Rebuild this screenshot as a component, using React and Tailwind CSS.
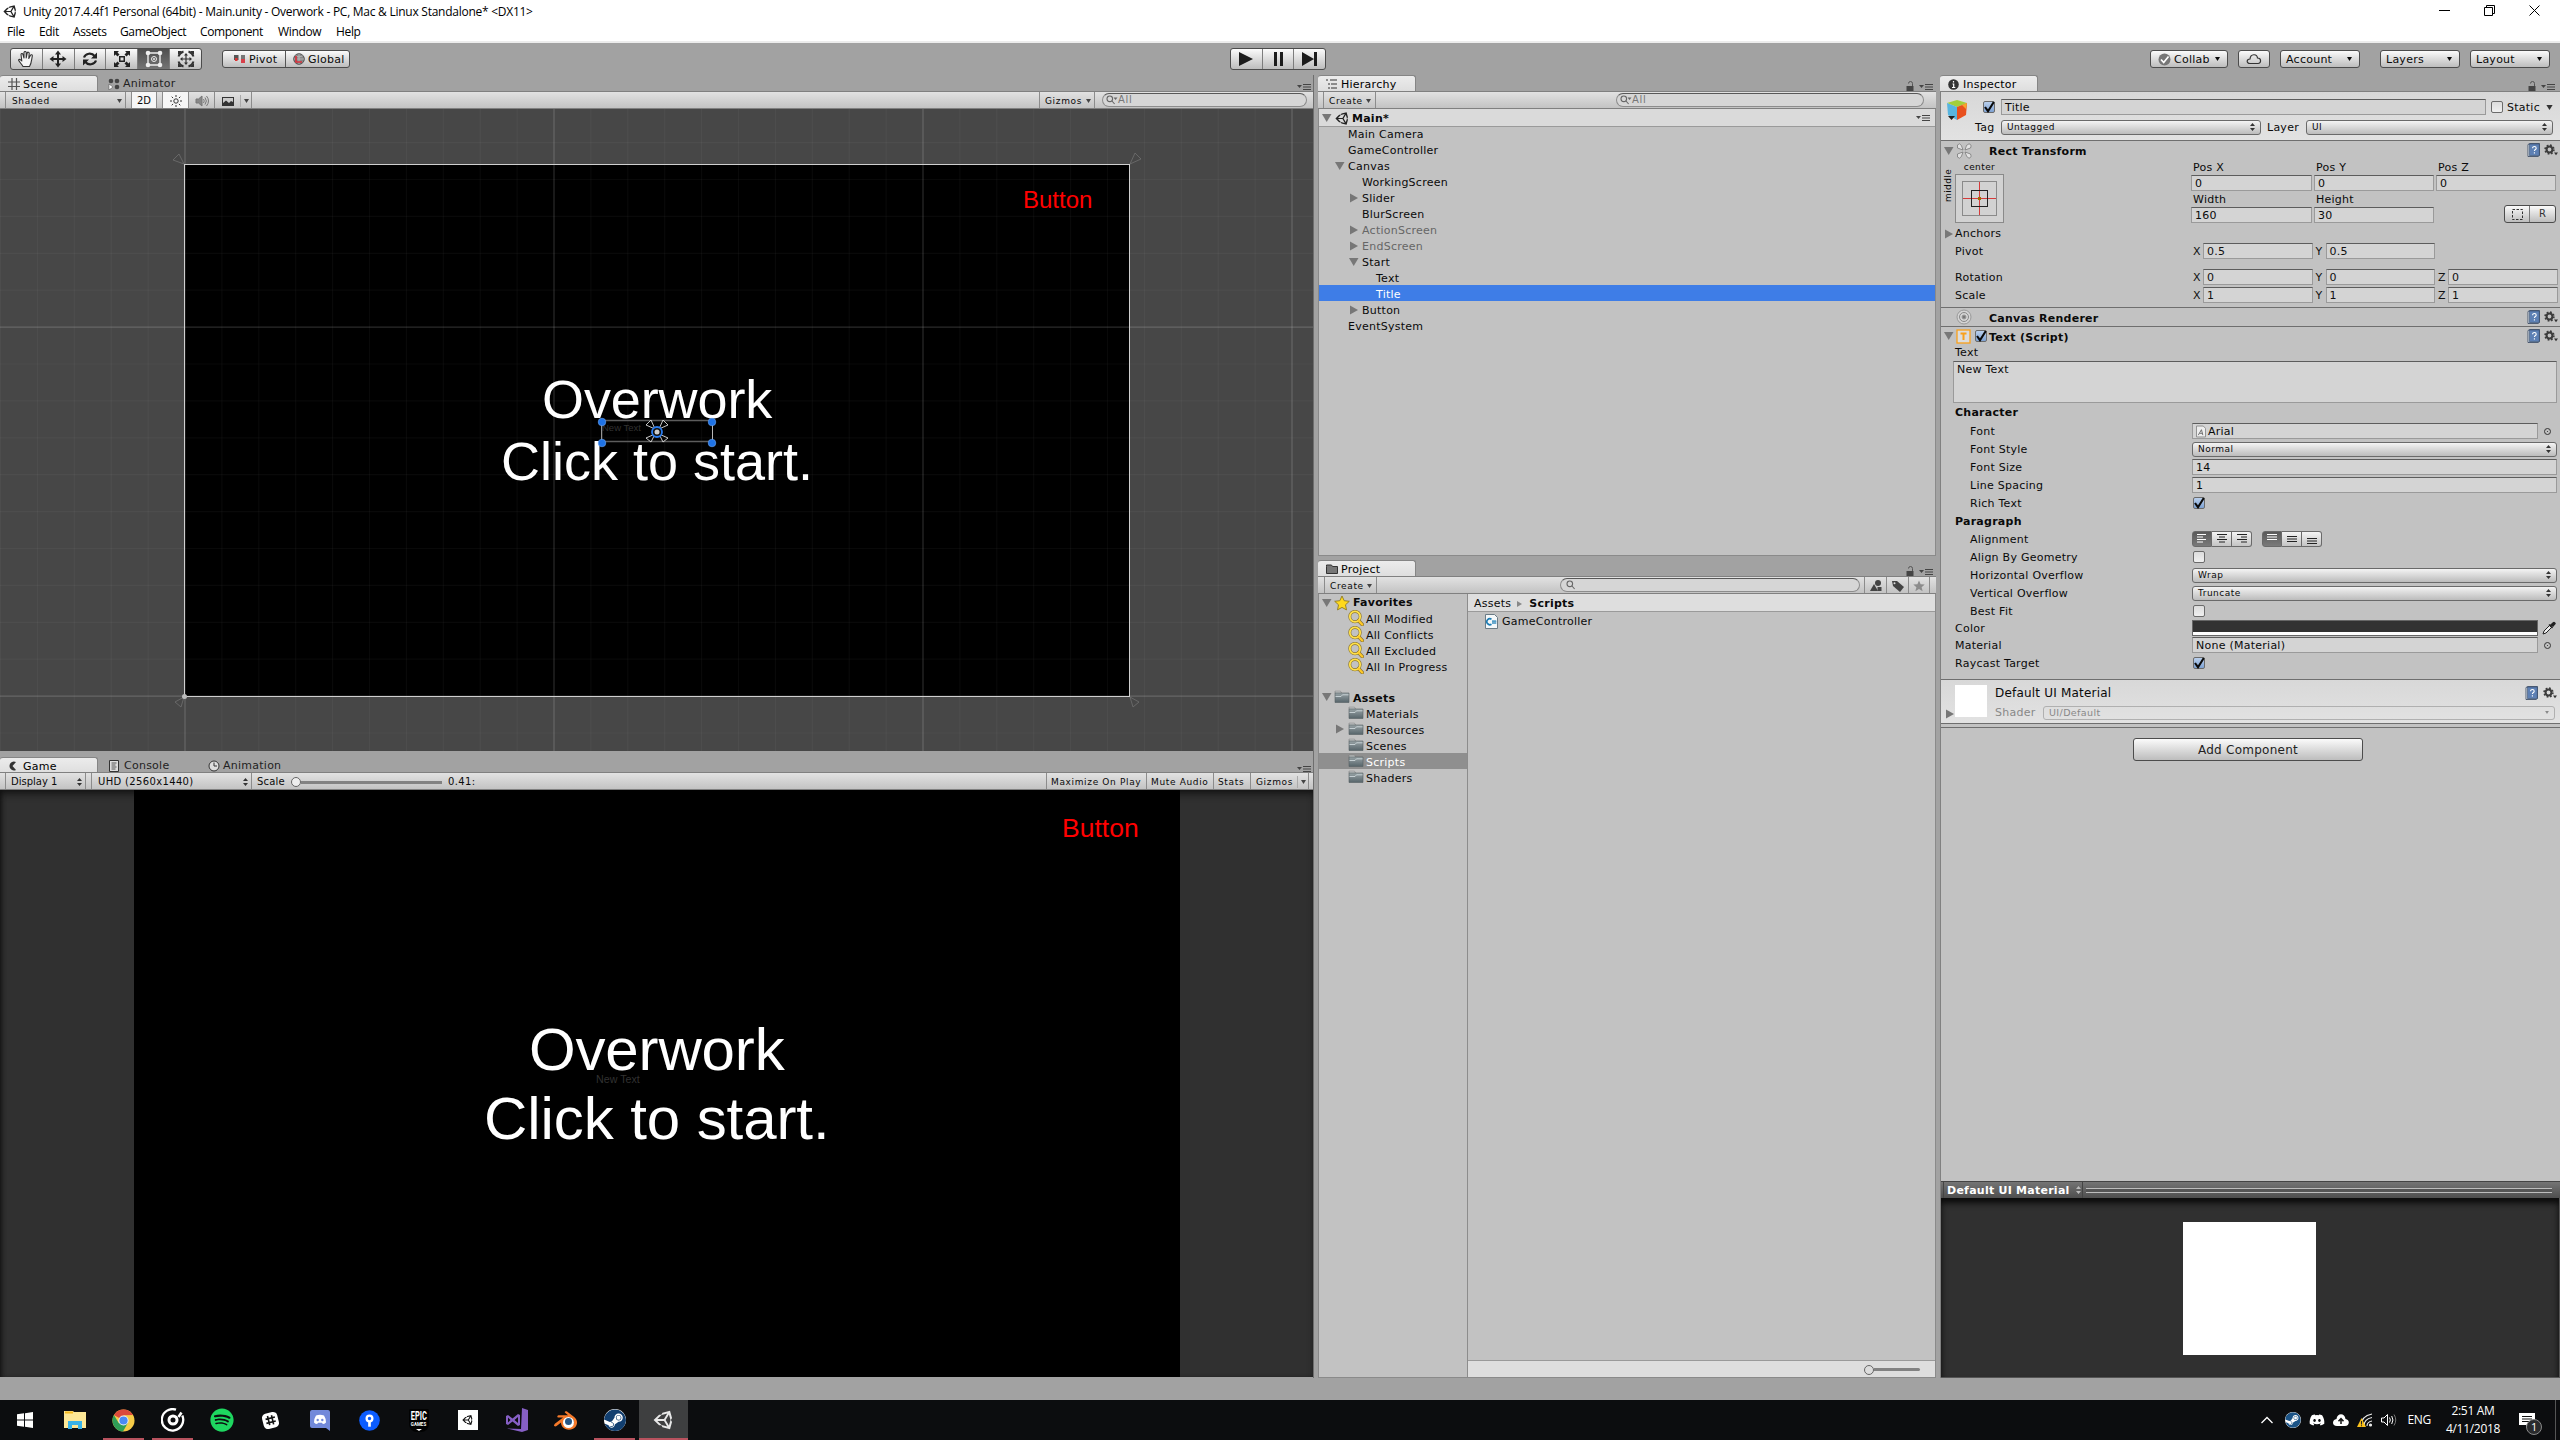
import React from 'react';
import { FaUnity, FaDiscord, FaSpotify, FaSteam } from 'react-icons/fa';
import { SiBlender } from 'react-icons/si';

/* ---------- small glyphs ---------- */

const Down = ({ className = 'w-[5px] h-[4px] text-[#444]' }) => (
  <svg viewBox="0 0 10 8" className={`shrink-0 ${className}`} fill="currentColor"><path d="M0 0h10L5 8z" /></svg>
);

const UpDown = ({ className = 'text-[#333]' }) => (
  <svg viewBox="0 0 5 8" className={`w-[5px] h-2 shrink-0 ${className}`} fill="currentColor">
    <path d="M2.5 0 5 3H0zM2.5 8 0 5h5z" />
  </svg>
);

const Fold = ({ open }) => (
  <svg viewBox="0 0 10 10" className="w-[10px] h-[10px] shrink-0" fill="#777">
    {open ? <path d="M0 1h9.5L4.700 9z" /> : <path d="M1 0.500v9l8-4.500z" />}
  </svg>
);

const PaneMenu = () => (
  <svg viewBox="0 0 14 6" className="w-[14px] h-[6px] shrink-0">
    <path d="M0 1h5L2.5 4z" fill="#444" />
    <path d="M6 .5h8M6 3h8M6 5.5h8" stroke="#444" strokeWidth="1" />
  </svg>
);

const Lock = () => (
  <svg viewBox="0 0 8 10" className="w-2 h-[10px] shrink-0">
    <rect x="0.5" y="5" width="7" height="5" fill="#444" />
    <path d="M2.5 2.5a2 2 0 0 1 4 0V5" fill="none" stroke="#555" strokeWidth="1" />
  </svg>
);

const Mag = ({ className, arrow }) => (
  <svg viewBox="0 0 12 10" className={className} fill="none" stroke="#666" strokeWidth="1.1">
    <circle cx="3.8" cy="3.8" r="2.8" />
    <path d="M6 6l2.6 3" />
    {arrow && <path d="M7.5 2.5h4L9.5 5z" fill="#666" stroke="none" />}
  </svg>
);

const Folder = () => (
  <svg viewBox="0 0 16 14" className="w-4 h-[14px] shrink-0">
    <defs>
      <linearGradient id="fold" x1="0" y1="0" x2="0" y2="1">
        <stop offset="0" stopColor="#98a3a6" /><stop offset="1" stopColor="#56646a" />
      </linearGradient>
    </defs>
    <path d="M1 3V1.2h5.5L7.5 3z" fill="#d9dedf" stroke="#777" strokeWidth=".6" />
    <path d="M1 3h14v9.5H1z" fill="url(#fold)" stroke="#555f63" strokeWidth=".6" />
    <path d="M1.5 6.5h5.5l1.5-1.700h6" fill="none" stroke="#ccd6d9" strokeWidth=".9" />
  </svg>
);

const YellowMag = () => (
  <svg viewBox="0 0 16 16" className="w-4 h-4 shrink-0" fill="none" strokeLinecap="round">
    <path d="M10.500 10.500l3.700 4" stroke="#8a7430" strokeWidth="3.600" />
    <circle cx="7" cy="6.600" r="5.200" stroke="#8a7430" strokeWidth="3" />
    <circle cx="7" cy="6.600" r="5.200" stroke="#ffe14a" strokeWidth="1.800" />
    <path d="M10.500 10.500l3.700 4" stroke="#ffc928" strokeWidth="2.200" />
  </svg>
);

const Help = () => (
  <svg viewBox="0 0 13 14" className="w-[13px] h-[14px] shrink-0">
    <path d="M1 1.5 3 .5h9.5v12L11 13.5H1z" fill="#e8eef5" stroke="#2d3f59" strokeWidth=".8" />
    <rect x="2.600" y="1" width="9.600" height="11.600" fill="#5d80b4" stroke="#33496b" strokeWidth=".6" />
    <path d="M5.600 5.200c0-2.400 3.600-2.200 3.600 0 0 1.300-1.800 1.300-1.800 2.800M7.400 9.300v1.200" stroke="#fff" strokeWidth="1.100" fill="none" />
  </svg>
);

const Gear = () => (
  <svg viewBox="0 0 14 12" className="w-[14px] h-3 shrink-0">
    <circle cx="5.500" cy="5.500" r="2.900" fill="none" stroke="#3c3c3c" strokeWidth="2" />
    <circle cx="5.500" cy="5.500" r="4.400" fill="none" stroke="#3c3c3c" strokeWidth="1.600" strokeDasharray="1.730 1.730" />
    <path d="M10 8.500h4l-2 2.800z" fill="#333" />
  </svg>
);

const Check = ({ on }) => (
  <span className={`w-3 h-3 shrink-0 rounded-[2px] border border-[#6b6b6b] flex items-center justify-center ${on ? 'bg-linear-to-b from-[#b9cfec] to-[#7ea2d3]' : 'bg-linear-to-b from-[#dcdcdc] to-[#f0f0f0]'}`}>
    {on && (
      <svg viewBox="0 0 12 12" className="w-3 h-3 shrink-0 -mt-px" fill="none" stroke="#0a0a0a" strokeWidth="2.100"><path d="M2 6l3 4.200L10.800 1" /></svg>
    )}
  </span>
);

/* ---------- controls ---------- */

const btn = 'border border-[#4c4c4c] bg-linear-to-b from-[#fbfbfb] to-[#bdbdbd]';

const Field = ({ className = '', children }) => (
  <span className={`h-4 flex items-center px-[3px] bg-[#d4d4d4] border border-[#9a9a9a] border-t-[#5c5c5c] ${className}`}>{children}</span>
);

const Select = ({ className = '', children }) => (
  <span className={`h-[15px] flex items-center justify-between pl-[5px] pr-[5px] rounded-[3px] border border-[#6a6a6a] bg-linear-to-b from-[#f4f4f4] to-[#bcbcbc] text-[9px] tracking-[0.5px] ${className}`}>
    {children}<UpDown />
  </span>
);

const Search = ({ className = '', children }) => (
  <div className={`h-[14px] rounded-full border border-[#8c8c8c] border-t-[#585858] bg-[#d6d6d6] flex items-center text-[#777] text-[10px] ${className}`}>{children}</div>
);

const Tab = ({ active, className = '', icon, children }) => (
  <div className={`h-4 flex items-center pl-2 pt-px ${active ? 'w-[98px] rounded-t-[3px] border-t border-r border-[#858585] bg-linear-to-b from-[#ececec] to-[#dedede] text-black' : 'text-[#222]'} ${className}`}>
    <span className="w-[15px] flex items-center shrink-0">{icon}</span>
    {children}
  </div>
);

const Bar = ({ className = '', children }) => (
  <div className={`h-[18px] shrink-0 flex items-stretch border-t border-b border-[#808080] bg-linear-to-b from-[#e2e2e2] to-[#c3c3c3] text-[9px] tracking-[0.65px] [&>span]:pt-[2px] ${className}`}>{children}</div>
);

/* ---------- top ---------- */

function TitleBar() {
  return (
    <div className="h-[43px] shrink-0 bg-white border-b-2 border-[#ececec] font-['Open_Sans',sans-serif] text-[12px] text-black">
      <div className="h-[23px] flex items-center pl-[3px]">
        <FaUnity className="w-[15px] h-[15px] mr-[5px] text-[#222]" />
        <span className="tracking-[-0.260px] whitespace-nowrap">Unity 2017.4.4f1 Personal (64bit) - Main.unity - Overwork - PC, Mac &amp; Linux Standalone* &lt;DX11&gt;</span>
        <div className="ml-auto mr-5 -mt-[2px] flex items-center gap-[34px]">
          <svg viewBox="0 0 11 11" className="w-[11px] h-[11px]" stroke="#000"><path d="M0 5.500h11" /></svg>
          <svg viewBox="0 0 11 11" className="w-[11px] h-[11px]" fill="none" stroke="#000"><path d="M.5 2.500h8v8h-8zM2.500 2.500v-2h8v8h-2" /></svg>
          <svg viewBox="0 0 11 11" className="w-[11px] h-[11px]" stroke="#000"><path d="M.5.5l10 10M10.500.5l-10 10" /></svg>
        </div>
      </div>
      <div className="h-[18px] flex items-center pl-[7px] tracking-[-0.350px]">
        <span className="w-8">File</span><span className="w-[34px]">Edit</span><span className="w-[47px]">Assets</span>
        <span className="w-20">GameObject</span><span className="w-[78px]">Component</span><span className="w-[58px]">Window</span><span>Help</span>
      </div>
    </div>
  );
}

const tools = [
  <svg key="h" viewBox="0 0 18 18" className="w-[18px] h-[18px]" fill="#f6f6f6" stroke="#333" strokeWidth="1.1" strokeLinejoin="round"><path d="M6 16.5C4.500 14 2.500 12 1.500 10c.8-1.200 2-.6 3.300 1L4 4.500c.2-1.300 1.600-1.300 2 0L7 8V2.500c.3-1.400 1.900-1.400 2.200 0V8l1-5c.5-1.300 2-1 2 .3L11.800 8.500l1.700-3.300c.8-1 2.100-.3 1.800.9C14.500 10 14.500 13.500 12.500 16.500z" /></svg>,
  <svg key="m" viewBox="0 0 18 18" className="w-[18px] h-[18px]" fill="#222"><path d="M9 .5 12 4.500h-2V8h3.500V6l4 3-4 3v-2H10v3.500h2L9 17.500 6 13.500h2V10H4.500v2l-4-3 4-3v2H8V4.500H6z" /></svg>,
  <svg key="r" viewBox="0 0 18 18" className="w-[18px] h-[18px]" fill="none" stroke="#222" strokeWidth="2.200"><path d="M3 7.500C4.500 3 11 2.500 13.500 6M15 10.500C13.500 15 7 15.500 4.500 12" /><path d="M16 2.500V8.500h-6zM2 15.500V9.500h6z" fill="#222" stroke="none" /></svg>,
  <svg key="s" viewBox="0 0 18 18" className="w-[18px] h-[18px]" fill="#222"><path d="M6 6h6v6H6zM1 1h5L4.500 2.500 6.500 4.500l-2 2-2-2L1 6zM17 1v5l-1.500-1.500-2 2-2-2 2-2L12 1zM1 17v-5l1.500 1.500 2-2 2 2-2 2L6 17zM17 17h-5l1.500-1.500-2-2 2-2 2 2L17 12z" /><path d="M7.500 7.500h3v3h-3z" fill="#ddd" /></svg>,
  <svg key="t" viewBox="0 0 18 18" className="w-[18px] h-[18px]" fill="none" stroke="#eee" strokeWidth="1.400"><path d="M3 3h12v12H3z" /><circle cx="9" cy="9" r="2.500" strokeWidth="1" /><g fill="#eee" stroke="none"><circle cx="9" cy="9" r="1" /><circle cx="3" cy="3" r="2.300" /><circle cx="15" cy="3" r="2.300" /><circle cx="3" cy="15" r="2.300" /><circle cx="15" cy="15" r="2.300" /></g></svg>,
  <svg key="a" viewBox="0 0 18 18" className="w-[18px] h-[18px]" fill="none" stroke="#333" strokeWidth="1.900"><path d="M9 4v10M4 9h10" strokeWidth="1.200" /><path d="M9 3l2 2.500H7zM9 15l2-2.500H7zM3 9l2.500 2V7zM15 9l-2.500 2V7z" fill="#333" stroke="none" /><path d="M1.500 6.500A8 8 0 0 1 6.500 1.500M11.500 1.500A8 8 0 0 1 16.500 6.500M16.500 11.500a8 8 0 0 1-5 5M6.500 16.500a8 8 0 0 1-5-5" /><path d="M1 1h4L1 5zM17 1v4l-4-4zM1 17v-4l4 4zM17 17h-4l4-4z" fill="#333" stroke="none" /></svg>,
];

const plays = [
  <svg key="p" viewBox="0 0 14 14" className="w-[14px] h-[14px]" fill="#1c1c1c"><path d="M0 0 14 7 0 14z" /></svg>,
  <svg key="u" viewBox="0 0 14 14" className="w-[14px] h-[14px]" fill="#1c1c1c"><path d="M3 0h3v14H3zM9 0h3v14H9z" /></svg>,
  <svg key="n" viewBox="0 0 16 14" className="w-4 h-[14px]" fill="#1c1c1c"><path d="M0 0 12 7 0 14zM12 0h3v14h-3z" /></svg>,
];

function Toolbar() {
  return (
    <div className="h-8 shrink-0 flex items-center pr-[10px]">
      <div className={`ml-[10px] h-[22px] w-48 flex rounded-[3px] overflow-hidden ${btn}`}>
        {tools.map((t, i) => (
          <span key={i} className={`flex-1 flex items-center justify-center ${i ? 'border-l border-[#7d7d7d]' : ''} ${i === 4 ? 'bg-linear-to-b from-[#4f4f4f] to-[#747474]' : ''}`}>{t}</span>
        ))}
      </div>
      <div className={`ml-5 h-[18px] w-32 flex rounded-[3px] ${btn}`}>
        <span className="w-1/2 flex items-center pl-[10px] border-r border-[#555]">
          <svg viewBox="0 0 13 10" className="w-[13px] h-[10px] mr-[3px]"><rect x="1" y="1" width="4.500" height="5" fill="#555" /><rect x="2" y="4" width="2.500" height="3" fill="#d33" /><rect x="8" y="1" width="4" height="5" fill="#777" /><rect x="8" y="5" width="4" height="4" fill="#d8404a" /></svg>
          Pivot
        </span>
        <span className="w-1/2 flex items-center pl-[7px]">
          <svg viewBox="0 0 12 12" className="w-3 h-3 mr-[3px]"><circle cx="6" cy="6" r="5.300" fill="#888" stroke="#555" /><path d="M6 1v10M1 6h10M2.500 3q3.500 2 7 0" stroke="#ccc" strokeWidth=".6" fill="none" /><path d="M3 3v6h6" stroke="#d8303c" strokeWidth="1.700" fill="none" /></svg>
          Global
        </span>
      </div>
      <div className={`ml-[880px] h-[22px] w-24 flex rounded-[3px] ${btn}`}>
        {plays.map((p, i) => <span key={i} className={`flex-1 flex items-center justify-center ${i ? 'border-l border-[#7d7d7d]' : ''}`}>{p}</span>)}
      </div>
      <div className="ml-auto flex">
        <span className={`h-[18px] w-[78px] rounded-[3px] flex items-center pl-[7px] pr-[7px] ${btn}`}>
          <svg viewBox="0 0 13 13" className="w-[13px] h-[13px] mr-[3px]"><circle cx="6.500" cy="6.500" r="6" fill="#777" /><path d="M3 6.500l2.700 3L10.500 3.500" stroke="#fff" strokeWidth="1.700" fill="none" /></svg>
          Collab<Down className="ml-auto w-[5px] h-[4px]" />
        </span>
        <span className={`ml-[10px] h-[18px] w-8 rounded-[3px] flex items-center justify-center ${btn}`}>
          <svg viewBox="0 0 16 12" className="w-4 h-3" fill="none" stroke="#333" strokeWidth="1.200"><path d="M4 10.500C0 10.500.500 6 4 6 4.500 .500 11 .500 11.500 5c4 0 4 5.500.500 5.500z" /></svg>
        </span>
        {[['Account', 'ml-[10px]'], ['Layers', 'ml-5'], ['Layout', 'ml-[10px]']].map(([t, m]) => (
          <span key={t} className={`${m} h-[18px] w-20 rounded-[3px] flex items-center justify-between pl-[5px] pr-[7px] ${btn}`}>{t}<Down className="w-[5px] h-[4px]" /></span>
        ))}
      </div>
    </div>
  );
}

/* ---------- scene and game ---------- */

const range = (n) => Array.from({ length: n }, (_, i) => i);

function SceneGrid() {
  return (
    <svg viewBox="0 0 1313 642" className="block w-[1313px] h-[642px]">
      <rect width="1313" height="642" fill="#474747" />
      <rect x="184.500" y="55.500" width="945" height="532" fill="#000" />
      {range(36).map((i) => {
        const major = i % 10 === 5;
        return <path key={i} d={`M${(0.5 + i * 36.9).toFixed(1)} 0V642`} stroke="#fff" strokeOpacity={major ? 0.17 : 0.035} strokeWidth="1.2" />;
      })}
      {range(17).map((i) => {
        const major = i === 5 || i === 15;
        return <path key={i} d={`M0 ${(33.6 + i * 36.9).toFixed(1)}H1313`} stroke="#fff" strokeOpacity={major ? 0.17 : 0.035} strokeWidth="1.2" />;
      })}
      <rect x="184.500" y="55.500" width="945" height="532" fill="none" stroke="#d0d0d0" />
      <g fill="none" stroke="#707070" strokeWidth=".8">
        <path d="M184 55l-11-4 6-6zM1130 55l5-11 6 6zM1130 588l9 5-6 5zM184 588l-9 5 6 5z" />
      </g>
      <circle cx="184.500" cy="587.500" r="2.500" fill="#bbb" />
    </svg>
  );
}

function Gizmo() {
  return (
    <svg viewBox="0 0 124 36" className="absolute left-[595px] top-[305px] w-[124px] h-9">
      <path d="M7 6.500H118M7 27.500H118" stroke="#5c5c5c" strokeWidth="1.500" />
      <path d="M6.700 8V28M117.500 8V28" stroke="#b8b8b8" />
      {[[7, 8], [117, 8], [7, 29], [117, 29]].map(([x, y]) => <circle key={`${x}-${y}`} cx={x} cy={y} r="3.800" fill="#1f73e6" stroke="#69a4f2" strokeWidth=".6" />)}
      <g fill="none" stroke="#ddd" strokeWidth=".9">
        <path d="M60 15l-9-4 5-5zM64 15l9-4-5-5zM60 20l-9 4 5 4zM64 20l9 4-5 4z" />
      </g>
      <circle cx="62" cy="18" r="5" fill="#111" stroke="#2a7df0" strokeWidth="1.800" />
      <circle cx="62" cy="18" r="2.500" fill="#ccc" />
    </svg>
  );
}

function SceneView() {
  return (
    <div className="flex flex-col">
      <div className="h-4 flex relative">
        <Tab active icon={<svg viewBox="0 0 12 12" className="w-3 h-3" stroke="#555" strokeWidth="1.200"><path d="M4 0v12M8.500 0v12M0 4h12M0 8.500h12" /></svg>}>Scene</Tab>
        <Tab className="ml-[2px]" icon={<svg viewBox="0 0 12 12" className="w-3 h-3" fill="#444"><circle cx="3" cy="3" r="2.300" /><circle cx="9" cy="3" r="2.300" /><circle cx="9" cy="9" r="2.300" /><path d="M1 6v6l4-3z" fill="#fff" stroke="#444" strokeWidth=".5" /></svg>}>Animator</Tab>
        <span className="ml-auto mr-[2px] pt-[9px]"><PaneMenu /></span>
      </div>
      <Bar>
        <span className="ml-[5px] w-[121px] border-x border-[#8c8c8c] flex items-center justify-between pl-[6px] pr-[3px]">Shaded<Down /></span>
        <span className="ml-[5px] w-[26px] bg-[#f6f6f6] border-x border-[#8c8c8c] flex items-center justify-center text-[10px] tracking-normal">2D</span>
        <span className="ml-[5px] w-[27px] bg-[#f6f6f6] border-x border-[#8c8c8c] flex items-center justify-center">
          <svg viewBox="0 0 12 12" className="w-3 h-3" fill="none" stroke="#333"><circle cx="6" cy="6" r="2.200" /><path d="M6 0v2M6 10v2M0 6h2M10 6h2M1.700 1.700l1.400 1.400M8.900 8.900l1.400 1.400M10.300 1.700 8.900 3.100M3.100 8.900 1.700 10.300" /></svg>
        </span>
        <span className="w-[26px] border-r border-[#8c8c8c] flex items-center justify-center">
          <svg viewBox="0 0 14 12" className="w-[14px] h-3" fill="none" stroke="#777"><path d="M1 4h2.500L7 1v10L3.500 8H1z" fill="#888" /><path d="M8.500 4q1.500 2 0 4M10 2.500q2.700 3.500 0 7M11.500 1q4 5 0 10" /></svg>
        </span>
        <span className="w-[37px] border-r border-[#8c8c8c] flex items-center pl-[7px]">
          <svg viewBox="0 0 12 9" className="w-3 h-[9px]"><rect width="12" height="9" fill="#333" /><path d="M1 1h10v4L9 4 7 6 4 3.500 1 6z" fill="#ccc" /></svg>
          <span className="ml-[6px] h-3 border-l border-[#aaa] pl-[3px] flex items-center"><Down /></span>
        </span>
        <span className="ml-auto w-14 border-x border-[#8c8c8c] flex items-center justify-between pl-[5px] pr-[3px]">Gizmos<Down /></span>
        <Search className="ml-[7px] mr-[6px] mt-px w-[205px] pl-[3px]"><Mag arrow className="w-3 h-[10px]" />All</Search>
      </Bar>
      <div className="relative w-[1313px] h-[642px] overflow-hidden font-['Liberation_Sans',Arial,sans-serif] tracking-normal leading-none text-white">
        <SceneGrid />
        <span className="absolute left-[1023px] top-[79px] text-[24px] text-[#f00]">Button</span>
        <span className="absolute left-[542px] top-[263px] text-[54px] tracking-[-0.100px]">Overwork</span>
        <span className="absolute left-[501px] top-[325px] text-[54px] whitespace-nowrap">Click to start.</span>
        <span className="absolute left-[602px] top-[314px] text-[9.500px] text-[#323232]">New Text</span>
        <Gizmo />
      </div>
    </div>
  );
}

function GameView() {
  return (
    <div className="flex flex-col mt-[6px]">
      <div className="h-[15px] flex">
        <Tab active icon={<svg viewBox="0 0 10 10" className="w-[10px] h-[10px]"><path d="M8 1A4.500 4.500 0 1 0 8 9L4.500 5z" fill="#333" /></svg>}>Game</Tab>
        <Tab className="ml-[3px] w-[98px]" icon={<svg viewBox="0 0 10 12" className="w-[10px] h-3" fill="none" stroke="#333"><path d="M.5.5h9v11h-9z" fill="#ddd" /><path d="M2.500 3h5M2.500 5h4M2.500 7h5M2.500 9h4" strokeWidth=".8" /></svg>}>Console</Tab>
        <Tab className="ml-px" icon={<svg viewBox="0 0 12 12" className="w-3 h-3" fill="#ddd" stroke="#333"><circle cx="6" cy="6" r="5" /><path d="M6 2.500V6h3" fill="none" /></svg>}>Animation</Tab>
        <span className="ml-auto mr-[2px] pt-[9px]"><PaneMenu /></span>
      </div>
      <Bar>
        <span className="ml-[5px] w-[81px] border-x border-[#8c8c8c] flex items-center justify-between pl-[5px] pr-[3px] text-[10px] tracking-normal">Display 1<UpDown /></span>
        <span className="ml-[5px] w-[161px] border-x border-[#8c8c8c] flex items-center justify-between pl-[6px] pr-[3px] text-[10px] tracking-[0.350px]">UHD (2560x1440)<UpDown /></span>
        <span className="flex items-center pl-[5px] text-[10px] tracking-[0.200px]">Scale</span>
        <span className="ml-[6px] w-[151px] flex items-center">
          <span className="w-[10px] h-[10px] rounded-full border border-[#666] bg-[#eee] shrink-0" />
          <span className="flex-1 h-[3px] bg-[#828282]" />
        </span>
        <span className="ml-[6px] flex items-center text-[10px] tracking-[0.400px]">0.41:</span>
        <span className="ml-auto w-[100px] border-l border-[#8c8c8c] flex items-center pl-1 whitespace-nowrap">Maximize On Play</span>
        <span className="w-[67px] border-l border-[#8c8c8c] flex items-center pl-1 whitespace-nowrap">Mute Audio</span>
        <span className="w-[37px] border-l border-[#8c8c8c] flex items-center pl-1">Stats</span>
        <span className="w-[59px] mr-[4px] border-x border-[#8c8c8c] flex items-center pl-[5px]">Gizmos
          <span className="ml-[4px] h-3 border-l border-[#aaa] pl-[3px] flex items-center"><Down /></span>
        </span>
      </Bar>
      <div className="relative w-[1313px] h-[587px] bg-[#303030] shadow-[inset_0_6px_8px_-3px_#111,inset_3px_0_5px_-2px_#111] px-[134px] font-['Liberation_Sans',Arial,sans-serif] tracking-normal leading-none text-white">
        <div className="w-[1046px] h-full bg-black" />
        <span className="absolute left-[1062px] top-[25px] text-[26.500px] text-[#f00]">Button</span>
        <span className="absolute left-[529px] top-[230px] text-[60px] tracking-[-0.150px]">Overwork</span>
        <span className="absolute left-[596px] top-[284px] text-[10.700px] text-[#323232]">New Text</span>
        <span className="absolute left-[484px] top-[299px] text-[60px] tracking-[-0.080px] whitespace-nowrap">Click to start.</span>
      </div>
    </div>
  );
}

/* ---------- hierarchy and project ---------- */

const nodes = [
  ['Main Camera', 0], ['GameController', 0], ['Canvas', 0, 'open'], ['WorkingScreen', 1], ['Slider', 1, 'closed'],
  ['BlurScreen', 1], ['ActionScreen', 1, 'closed', true], ['EndScreen', 1, 'closed', true], ['Start', 1, 'open'],
  ['Text', 2], ['Title', 2], ['Button', 1, 'closed'], ['EventSystem', 0],
];
const indent = ['pl-4', 'pl-[30px]', 'pl-[44px]'];

function Hierarchy() {
  return (
    <div className="flex flex-col h-[481px]">
      <div className="h-4 flex">
        <Tab active icon={<svg viewBox="0 0 12 10" className="w-3 h-[10px]" stroke="#333"><path d="M0 1h2M4 1h7M2 5h2M5 5h6M2 9h2M5 9h6" /></svg>}>Hierarchy</Tab>
        <span className="ml-auto mr-[3px] flex items-end gap-[5px]"><Lock /><span className="pb-px"><PaneMenu /></span></span>
      </div>
      <Bar>
        <span className="ml-[5px] w-[53px] border-x border-[#8c8c8c] flex items-center justify-between pl-[5px] pr-[4px]">Create<Down /></span>
        <Search className="ml-auto mr-3 mt-px w-[308px] pl-[3px]"><Mag arrow className="w-3 h-[10px]" />All</Search>
      </Bar>
      <div className="flex-1 bg-[#c2c2c2] border-x border-b border-[#8a8a8a]">
        <div className="h-[18px] bg-[#dadada] border-b border-[#9a9a9a] flex items-center pt-px pl-[3px] pr-[5px]">
          <Fold open /><FaUnity className="ml-[3px] mr-[2px] w-[15px] h-[15px] text-[#222]" /><b>Main*</b>
          <span className="ml-auto"><PaneMenu /></span>
        </div>
        <div className="-mt-[2px]">
          {nodes.map(([name, d, fold, dim]) => (
            <div key={name} className={`h-4 flex items-center pt-[2px] ${indent[d]} ${name === 'Title' ? 'bg-[#3e7de7] text-white' : dim ? 'text-[#666]' : ''}`}>
              <span className="w-[13px] flex -mt-px">{fold && <Fold open={fold === 'open'} />}</span>{name}
            </div>
          ))}
        </div>
      </div>
    </div>
  );
}

function Project() {
  return (
    <div className="flex flex-col flex-1 mt-1">
      <div className="h-4 flex">
        <Tab active icon={<svg viewBox="0 0 12 10" className="w-3 h-[10px]"><path d="M.5 2.500V1h5l1 1.500h5v7H.5z" fill="#777" stroke="#333" /></svg>}>Project</Tab>
        <span className="ml-auto mr-[3px] flex items-end gap-[5px]"><Lock /><span className="pb-px"><PaneMenu /></span></span>
      </div>
      <Bar>
        <span className="ml-[6px] w-[53px] border-x border-[#8c8c8c] flex items-center justify-between pl-[5px] pr-[4px]">Create<Down /></span>
        <Search className="ml-auto mr-1 mt-px w-[300px] pl-[5px]"><Mag className="w-3 h-[10px]" /></Search>
        <span className="w-[22px] border-l border-[#8c8c8c] flex items-center justify-center"><svg viewBox="0 0 12 12" className="w-3 h-3" fill="#444"><path d="M4 4l4 7H0z" /><circle cx="8" cy="3" r="3" /><path d="M7.500 7h4v4h-4z" /></svg></span>
        <span className="w-[22px] border-l border-[#8c8c8c] flex items-center justify-center"><svg viewBox="0 0 12 12" className="w-3 h-3" fill="#444"><path d="M0 1h5l7 6-4 5-7-6z" /><circle cx="2.500" cy="3.200" r="1" fill="#ddd" /></svg></span>
        <span className="w-[22px] mr-[6px] border-x border-[#8c8c8c] flex items-center justify-center"><svg viewBox="0 0 12 12" className="w-3 h-3" fill="#8c8c8c"><path d="M6 .5l1.600 3.800 4.100.3-3.100 2.700 1 4L6 9.100l-3.600 2.200 1-4L.3 4.600l4.100-.3z" /></svg></span>
      </Bar>
      <div className="flex-1 flex bg-[#c2c2c2] border-x border-b border-[#8a8a8a]">
        <div className="w-[149px] border-r border-[#8c8c8c]">
          <div className="h-4 flex items-center pl-[3px] pt-px">
            <Fold open />
            <svg viewBox="0 0 16 16" className="w-4 h-4 ml-[2px] mr-[3px]"><path d="M8 1l2.200 4.700 5.100.6-3.800 3.500 1 5.100L8 12.400l-4.500 2.500 1-5.100L.7 6.300l5.100-.6z" fill="#ffd91c" stroke="#8f7a20" strokeWidth=".9" /></svg>
            <b>Favorites</b>
          </div>
          {['All Modified', 'All Conflicts', 'All Excluded', 'All In Progress'].map((t) => (
            <div key={t} className="h-4 flex items-center pl-[29px] gap-[2px] whitespace-nowrap"><YellowMag /><span className="pt-[2px]">{t}</span></div>
          ))}
          <div className="h-4 mt-[15px] flex items-center pl-[3px]"><Fold open /><span className="ml-[2px] mr-[3px]"><Folder /></span><b className="pt-[2px]">Assets</b></div>
          {['Materials', 'Resources', 'Scenes', 'Scripts', 'Shaders'].map((t) => (
            <div key={t} className={`h-4 flex items-center pl-4 ${t === 'Scripts' ? 'bg-[#8f8f8f] text-white' : ''}`}>
              <span className="w-[13px] flex">{t === 'Resources' && <Fold />}</span><Folder /><span className="ml-[2px] pt-[2px]">{t}</span>
            </div>
          ))}
        </div>
        <div className="flex-1 flex flex-col">
          <div className="h-[18px] bg-[#dedede] border-b border-[#9a9a9a] flex items-center pt-[2px] pl-[6px]">
            Assets
            <svg viewBox="0 0 5 6" className="w-[5px] h-[6px] ml-[6px] mr-[7px]" fill="#888"><path d="M0 0l5 3-5 3z" /></svg>
            <b>Scripts</b>
          </div>
          <div className="h-[18px] flex items-center pl-[17px]">
            <svg viewBox="0 0 13 15" className="w-[13px] h-[15px] mr-1"><path d="M.5.5h9l3 3v11H.5z" fill="#f4f8fa" stroke="#6b7b85" /><path d="M6.500 5.200a3 3 0 1 0 0 5" fill="none" stroke="#1c7db5" strokeWidth="1.700" /><path d="M8 6v4M10 6v4M7 7.200h4.500M7 9h4.500" stroke="#1c7db5" strokeWidth=".8" /></svg>
            <span className="pt-px">GameController</span>
          </div>
          <div className="mt-auto h-[17px] bg-[#dedede] border-t border-[#9a9a9a] flex items-center justify-end pt-px pr-[15px]">
            <span className="w-[10px] h-[10px] rounded-full border border-[#666] bg-[#ddd]" />
            <span className="w-[46px] h-[3px] bg-[#828282] rounded-r" />
          </div>
        </div>
      </div>
    </div>
  );
}

/* ---------- inspector ---------- */

const CompHead = ({ fold, icon, check, className = '', children }) => (
  <div className={`flex items-center pl-[3px] pr-[2px] ${className}`}>
    <span className="w-[12px] flex">{fold && <Fold open />}</span>
    <span className="w-[19px] flex">{icon}</span>
    <span className="w-[14px] flex">{check && <Check on />}</span>
    <b className="pt-[2px]">{children}</b>
    <span className="ml-auto -mt-px flex items-center gap-1"><Help /><Gear /></span>
  </div>
);

const Row = ({ label, sub, h = 'h-[18px]', children }) => (
  <div className={`flex items-center pr-[3px] ${h}`}>
    <span className={`w-[251px] shrink-0 ${sub ? 'pl-[29px]' : 'pl-[14px]'}`}>{label}</span>
    {children}
  </div>
);

const Axis = ({ n, v }) => (
  <span className="w-[120.500px] flex items-center text-[#111]">
    <span className="w-[11px] pl-px">{n}</span><Field className="flex-1">{v}</Field>
  </span>
);

const Dot = () => (
  <svg viewBox="0 0 9 9" className="w-[9px] h-[9px] mx-auto" fill="none" stroke="#333"><circle cx="4.500" cy="4.500" r="3" /><circle cx="4.500" cy="4.500" r=".6" fill="#333" stroke="none" /></svg>
);

const Lines = ({ d, on, first, last }) => (
  <span className={`w-5 h-4 flex items-center justify-center border border-[#6a6a6a] ${first ? 'rounded-l-[3px]' : 'border-l-0'} ${last ? 'rounded-r-[3px]' : ''} ${on ? 'bg-linear-to-b from-[#5a5a5a] to-[#7a7a7a] text-white' : 'bg-linear-to-b from-[#f4f4f4] to-[#c4c4c4] text-[#222]'}`}>
    <svg viewBox="0 0 10 10" className="w-[10px] h-[10px]" stroke="currentColor"><path d={d} /></svg>
  </span>
);

function RectTransform() {
  const cols = 'grid grid-cols-[121px_120px_120px] gap-x-[2px]';
  return (
    <div className="h-[167px] border-b border-[#6e6e6e]">
      <CompHead fold className="h-[19px]" icon={<svg viewBox="0 0 16 16" className="w-4 h-4" fill="#e2e2e2" stroke="#777" strokeWidth=".8"><path d="M7 7 1.500 5Q.5 1 3.500 .8Q5.500 1 7 7zM9 7q1-6 4-6.200Q16 1.500 14.500 5zM7 9q-1.500 6-3.500 6.200Q.5 15 1.500 11zM9 9l5.500 2q1.500 3.500-1.500 4.200Q10.500 15 9 9z" /></svg>}>Rect Transform</CompHead>
      <div className="flex h-[64px]">
        <div className="w-[250px] flex">
          <span className="w-[14px] pt-[14px] flex items-center justify-center text-[9px] tracking-[0.4px] [writing-mode:vertical-rl] rotate-180">middle</span>
          <div className="w-[49px]">
            <div className="h-[14px] text-center text-[9px] leading-[14px] tracking-[0.4px]">center</div>
            <svg viewBox="0 0 49 49" className="block w-[49px] h-[49px]" fill="none">
              <rect x=".5" y=".5" width="48" height="48" fill="#d2d2d2" stroke="#8a8a8a" />
              <rect x="7.500" y="7.500" width="34" height="34" stroke="#8a8a8a" />
              <path d="M24.500 8v33M8 24.500h33" stroke="#d63a3a" />
              <rect x="16.500" y="16.500" width="16" height="16" stroke="#222" />
              <rect x="23" y="23" width="3" height="3" fill="#a06a00" />
            </svg>
          </div>
        </div>
        <div>
          <div className={`${cols} h-[15px] items-center`}><span className="pl-[2px]">Pos X</span><span className="pl-[2px]">Pos Y</span><span className="pl-[2px]">Pos Z</span></div>
          <div className={cols}><Field>0</Field><Field>0</Field><Field>0</Field></div>
          <div className={`${cols} h-4 items-center`}><span className="pl-[2px]">Width</span><span className="pl-[2px]">Height</span></div>
          <div className={`${cols} h-4`}><Field>160</Field><Field>30</Field>
            <span className={`ml-auto -mt-[2px] w-[52px] h-[18px] flex rounded-[3px] ${btn}`}>
              <span className="w-1/2 border-r border-[#777] flex items-center justify-center"><svg viewBox="0 0 11 11" className="w-[11px] h-[11px]" fill="none" stroke="#333"><path d="M.5.5h10v10H.5z" strokeDasharray="2.500 1.500" /></svg></span>
              <span className="w-1/2 flex items-center justify-center text-[10px] text-[#333]">R</span>
            </span>
          </div>
        </div>
      </div>
      <div className="h-[17px] flex items-center pl-[3px] mt-px"><Fold /><span className="pl-px">Anchors</span></div>
      <Row label="Pivot"><span className="flex gap-[2px]"><Axis n="X" v="0.5" /><Axis n="Y" v="0.5" /></span></Row>
      <div className="h-2" />
      <Row label="Rotation"><span className="flex gap-[2px]"><Axis n="X" v="0" /><Axis n="Y" v="0" /><Axis n="Z" v="0" /></span></Row>
      <Row label="Scale"><span className="flex gap-[2px]"><Axis n="X" v="1" /><Axis n="Y" v="1" /><Axis n="Z" v="1" /></span></Row>
    </div>
  );
}

function Inspector() {
  return (
    <div className="flex flex-col w-[620px]">
      <div className="h-4 flex">
        <Tab active icon={<svg viewBox="0 0 11 11" className="w-[11px] h-[11px]"><circle cx="5.500" cy="5.500" r="5.300" fill="#333" /><path d="M5.500 2v1.500M4.500 5h1.200v3.500M4 8.500h3.300" stroke="#fff" strokeWidth="1.200" fill="none" /></svg>}>Inspector</Tab>
        <span className="ml-auto mr-[5px] flex items-end gap-[5px]"><Lock /><span className="pb-px"><PaneMenu /></span></span>
      </div>
      <div className="flex-1 flex flex-col bg-[#c2c2c2] border-l border-t border-[#808080]">
        <div className="h-[49px] bg-linear-to-b from-[#d8d8d8] to-[#e2e2e2] border-b border-[#6e6e6e] flex pl-[5px]">
          <svg viewBox="0 0 22 22" className="w-[22px] h-[22px] mt-[7px]"><path d="M1 4 11 1l10 3-10 4z" fill="#a3cf3c" /><path d="M1 4l10 4v13L2 16z" fill="#58b5e0" /><path d="M21 4 11 8v13l9-5z" fill="#e8501e" /><path d="M16 6l5-2-1 6z" fill="#f7a52c" /><path d="M2 17h7l-3.500 4z" fill="#222" /></svg>
          <div className="flex-1 pl-[7px]">
            <div className="flex items-center h-4 mt-[7px] pl-2">
              <Check on /><Field className="ml-[6px] w-[485px]">Title</Field>
              <span className="ml-[5px]"><Check /></span><span className="ml-1">Static</span><Down className="ml-[5px] w-[9px] h-[5px] text-[#333]" />
            </div>
            <div className="flex items-center h-4 mt-1"><span className="w-[26px]">Tag</span><Select className="w-[260px]">Untagged</Select><span className="w-[39px] ml-[6px]">Layer</span><Select className="w-[247px]">UI</Select></div>
          </div>
        </div>
        <RectTransform />
        <CompHead className="h-[19px] border-b border-[#6e6e6e]" icon={<svg viewBox="0 0 16 16" className="w-4 h-4" fill="none" stroke="#999"><circle cx="8" cy="8" r="7" fill="#d4d4d4" /><circle cx="8" cy="8" r="4.500" stroke="#888" /><circle cx="8" cy="8" r="2" fill="#777" /></svg>}>Canvas Renderer</CompHead>
        <CompHead fold check className="h-[18px]" icon={<svg viewBox="0 0 15 15" className="w-[15px] h-[15px]"><rect x="1" y="1" width="13" height="13" fill="#ddd" stroke="#f9a01b" strokeWidth="1.300" /><path d="M4.500 4.500h6M7.500 4.500V11" stroke="#f9a01b" strokeWidth="2" /></svg>}>Text (Script)</CompHead>
        <div className="h-4 pl-[14px] leading-4">Text</div>
        <div className="ml-3 mr-[3px] h-[42px] px-[3px] pt-px bg-[#d4d4d4] border border-[#9a9a9a] border-t-[#5c5c5c] leading-[14px]">New Text</div>
        <div className="h-[19px] pt-px pl-[14px] leading-[18px]"><b>Character</b></div>
        <Row sub label="Font"><Field className="w-[346px]"><svg viewBox="0 0 11 13" className="w-[10px] h-[13px] mr-[2px]"><path d="M.5.5h7.500l2.500 2.500v9.500H.5z" fill="#eee" stroke="#888" /><path d="M2.500 10.500 6 4.500l1.500 6M4 8.500h3" stroke="#666" fill="none" /></svg>Arial</Field><Dot /></Row>
        <Row sub label="Font Style"><Select className="flex-1">Normal</Select></Row>
        <Row sub label="Font Size"><Field className="flex-1">14</Field></Row>
        <Row sub label="Line Spacing"><Field className="flex-1">1</Field></Row>
        <Row sub label="Rich Text"><span className="pl-px"><Check on /></span></Row>
        <Row label={<b>Paragraph</b>} />
        <Row sub label="Alignment">
          <Lines first on d="M0 .5h9M0 3h6M0 5.500h9M0 8h6" /><Lines d="M0 .5h10M2 3h6M0 5.500h10M2 8h6" /><Lines last d="M0 .5h10M4 3h6M0 5.500h10M4 8h6" />
          <span className="w-[10px]" />
          <Lines first on d="M0 .5h10M0 3h10M0 5.500h10" /><Lines d="M0 2.500h10M0 5h10M0 7.500h10" /><Lines last d="M0 4.500h10M0 7h10M0 9.500h10" />
        </Row>
        <Row sub label="Align By Geometry"><span className="pl-px"><Check /></span></Row>
        <Row sub label="Horizontal Overflow"><Select className="flex-1">Wrap</Select></Row>
        <Row sub label="Vertical Overflow"><Select className="flex-1">Truncate</Select></Row>
        <Row sub label="Best Fit"><span className="pl-px"><Check /></span></Row>
        <Row h="h-4" label="Color">
          <span className="w-[346px] h-4 border border-[#666] bg-[#323232] flex items-end"><span className="w-full h-[3px] bg-white" /></span>
          <svg viewBox="0 0 14 14" className="w-[14px] h-[14px] ml-1" stroke="#222" fill="#eee"><path d="M1 13l1-3 5.500-5.500 2 2L4 12z" /><path d="M7 3.500l3.500 3.500M8.500 4.500 11 2q1.500-1 2 .5l-2.500 3" fill="#222" strokeWidth="1.500" /></svg>
        </Row>
        <Row label="Material"><Field className="w-[346px]">None (Material)</Field><Dot /></Row>
        <Row label="Raycast Target"><span className="pl-px"><Check on /></span></Row>
        <div className="mt-[7px] h-[45px] border-y border-[#6e6e6e] bg-linear-to-b from-[#d8d8d8] to-[#e2e2e2] flex pl-1">
          <span className="self-end pb-1 w-[10px]"><Fold /></span>
          <span className="w-8 h-8 bg-white mt-[5px]" />
          <div className="flex-1 pl-2 pr-[5px]">
            <div className="h-[25px] flex items-center text-[12px] tracking-[0.2px]">Default UI Material<span className="ml-auto -mr-[2px] flex items-center gap-[5px]"><Help /><Gear /></span></div>
            <div className="h-[15px] flex items-center text-[#888]"><span className="w-12">Shader</span>
              <span className="flex-1 h-[14px] rounded-[3px] border border-[#b0b0b0] flex items-center justify-between px-[5px] text-[9.500px] tracking-[0.400px]">UI/Default<Down className="w-1 h-[3px] text-[#888]" /></span>
            </div>
          </div>
        </div>
        <div className="h-1 border-b border-[#6e6e6e]" />
        <span className={`mt-[10px] ml-[192px] w-[230px] h-[23px] rounded-[3px] flex items-center justify-center text-[12px] tracking-[0.260px] text-[#222] ${btn}`}>Add Component</span>
        <div className="mt-auto h-[17px] bg-linear-to-b from-[#757575] to-[#4e4e4e] border-t border-[#444] flex items-stretch text-white">
          <span className="ml-[2px] w-[140px] border-x border-[#444] flex items-center pl-[3px] gap-[6px] whitespace-nowrap"><b>Default UI Material</b><UpDown className="text-[#bbb]" /></span>
          <span className="flex-1 ml-[3px] mr-2 my-auto h-[5px] border-y border-[#bdbdbd] bg-[#555]" />
        </div>
        <div className="h-[180px] bg-[#303030] border-r border-b border-[#555] shadow-[inset_0_5px_6px_#0a0a0a] flex justify-center pt-6 pr-[2px]">
          <span className="w-[133px] h-[133px] bg-white" />
        </div>
      </div>
    </div>
  );
}

/* ---------- taskbar ---------- */

const apps = [
  ['win', <svg viewBox="0 0 16 16" className="w-4 h-4" fill="#fff"><path d="M0 2.300 7 1.300V7.600H0zM8 1.200 16 0v7.600H8zM0 8.400h7v6.300l-7-1zM8 8.400h8V16l-8-1.200z" /></svg>],
  ['files', <svg viewBox="0 0 22 18" className="w-[22px] h-[18px]"><path d="M0 0h9l1 1h12v16H0z" fill="#fde796" /><path d="M1 .5h8v2H1z" fill="#f5b81c" /><path d="M4 18v-8h14v8h-4v-4H8v4z" fill="#39b3e8" /></svg>],
  ['chrome', <svg viewBox="0 0 24 24" className="w-[23px] h-[23px]"><circle cx="12" cy="12" r="11.500" fill="#f6cb47" /><path d="M12 12 2 6.300A11.500 11.500 0 0 1 22 6.300L12 6.500z" fill="#db4a3c" /><path d="M2 6.300A11.500 11.500 0 0 0 11.500 23.500L16.500 14.500 7 14.500z" fill="#2f9e57" /><circle cx="12" cy="12" r="5.300" fill="#f3f3f3" /><circle cx="12" cy="12" r="4.300" fill="#4a8af4" /></svg>, 1],
  ['groove', <svg viewBox="0 0 24 24" className="w-6 h-6" fill="none" stroke="#fff"><path d="M21.300 7.500A10.700 10.700 0 1 1 15 1.700" strokeWidth="2.300" /><circle cx="12" cy="12" r="4" strokeWidth="3" /><path d="M17.500 9 20.500 4.500" strokeWidth="2.600" /></svg>, 1],
  ['spotify', <FaSpotify className="w-6 h-6 text-[#1ed760]" />],
  ['slack', <svg viewBox="0 0 20 20" className="w-[19px] h-[19px]"><rect x="1.800" y="1.800" width="16.400" height="16.400" rx="4.500" fill="#fff" transform="rotate(-14 10 10)" /><path d="M6.800 5.300l2.400 9.600M11 4.500l2.300 9.600M4.800 8.800l9.800-2.500M5.700 13l9.800-2.500" stroke="#111" strokeWidth="1.700" /></svg>],
  ['discord', <svg viewBox="0 0 20 22" className="w-5 h-[22px]"><path d="M2 1h16q2 0 2 2v19l-4-3H2q-2 0-2-2V3q0-2 2-2z" fill="#7289da" /><path d="M6 6.500q4-1.500 8 0 2 3 2 7-1.500 1.500-3.200 1.500l-.8-1.200h-4L7.200 15Q5.500 15 4 13.500q0-4 2-7z" fill="#fff" /><circle cx="7.700" cy="11" r="1.200" fill="#7289da" /><circle cx="12.300" cy="11" r="1.200" fill="#7289da" /></svg>],
  ['sourcetree', <svg viewBox="0 0 22 22" className="w-[21px] h-[21px]"><circle cx="11" cy="11" r="10.800" fill="#0b5cff" /><circle cx="11" cy="9" r="3" fill="none" stroke="#fff" strokeWidth="2.400" /><path d="M11 12v5.500" stroke="#fff" strokeWidth="2.800" /></svg>],
  ['epic', <span className="w-5 h-[23px] flex flex-col items-center bg-[#020202] rounded-t-[2px] rounded-b-[8px] font-['Roboto',sans-serif] text-white font-bold leading-none pt-[2px] tracking-normal"><span className="text-[11px] scale-x-[0.68] scale-y-110">EPIC</span><span className="text-[4.500px] mt-px">GAMES</span><svg viewBox="0 0 6 2" className="w-[6px] h-[2px] mt-[2px]" fill="#fff"><path d="M0 0h6L3 2z" /></svg></span>],
  ['hub', <span className="w-5 h-5 bg-white flex items-center justify-center"><FaUnity className="w-3 h-3 text-[#111]" /></span>],
  ['vs', <svg viewBox="0 0 24 24" className="w-6 h-6" fill="#865fc5"><path d="M17 0l6 2v20l-6 2-15-3.500 14 .5z" /><path d="M1 8l2-1 4.500 3.500L13 6l2 1v10l-2 1-5.500-4.500L3 17l-2-1zM3 9.500v5L5.500 12zM13 9l-3.500 3 3.500 3z" fillRule="evenodd" /></svg>],
  ['blender', <span className="w-[23px] h-[23px] grid place-items-center"><span className="[grid-area:1/1] translate-x-[3px] translate-y-[2px] w-[11px] h-[11px] rounded-full bg-white" /><span className="[grid-area:1/1] translate-x-[3px] translate-y-[1px] w-[7px] h-[7px] rounded-full bg-[#265787] z-10" /><SiBlender className="[grid-area:1/1] w-[23px] h-[23px] text-[#f5792a]" /></span>],
  ['steam', <span className="w-[22px] h-[22px] rounded-full bg-white flex items-center justify-center overflow-hidden"><FaSteam className="w-[23px] h-[23px] text-[#123f70]" /></span>, 1],
  ['unity', <FaUnity className="w-[22px] h-[22px] text-[#e8e8e8]" />, 2],
];

function Taskbar() {
  return (
    <div className="h-10 shrink-0 bg-[#0c0d0f] flex text-white font-['Open_Sans',sans-serif] text-[12px]">
      {apps.map(([k, icon, run], i) => (
        <span key={k} className={`relative shrink-0 ${i === 0 || i === 7 ? 'w-[50px]' : 'w-[49px]'} h-10 flex items-center justify-center ${run === 2 ? 'bg-[#3e3f40]' : ''}`}>
          {icon}
          {run && <span className={`absolute bottom-0 h-[2px] bg-[#b8525e] ${run === 2 ? 'inset-x-0' : 'inset-x-[4px]'}`} />}
        </span>
      ))}
      <div className="ml-auto flex items-center tracking-[-0.3px]">
        <svg viewBox="0 0 12 8" className="w-3 h-2 mr-3" fill="none" stroke="#fff" strokeWidth="1.300"><path d="M.5 7 6 1.500 11.500 7" /></svg>
        <FaSteam className="w-4 h-4 mr-2 text-[#1c5487] bg-white rounded-full" />
        <FaDiscord className="w-4 h-4 mr-2" />
        <svg viewBox="0 0 16 12" className="w-4 h-3 mr-2"><path d="M4 12C-1.500 12-1 5.500 3.500 5 4-1.500 12-1.500 12.500 5c4.500.5 4.500 7-.5 7z" fill="#fff" /><path d="M8 10V5M5.500 7.200 8 4.500l2.500 2.700" stroke="#111" strokeWidth="1.500" fill="none" /></svg>
        <svg viewBox="0 0 16 14" className="w-4 h-[14px] mr-2" fill="none" stroke="#eee" strokeWidth="1.100"><path d="M4 13Q4 3 15 1M7 13q0-7 8-8.500M10 13q0-4 5-5" /><circle cx="13.500" cy="12" r="1" fill="#eee" /><path d="M4.500 5l4.500 9H0z" fill="#fcc21b" stroke="none" /><path d="M4.500 8v3.500M4.500 12.300v1" stroke="#222" /></svg>
        <svg viewBox="0 0 16 14" className="w-4 h-[14px] mr-[10px]" fill="none" stroke="#fff"><path d="M.5 5h2.500L6.500 1.500v11L3 9H.5z" /><path d="M8.500 4.500q1.700 2.500 0 5M10.700 3q2.500 4 0 8" /><path d="M13 1.500q3.500 5.500 0 11" stroke="#777" /></svg>
        <span>ENG</span>
        <span className="ml-[15px] w-[54px] flex flex-col items-center leading-[18px] whitespace-nowrap"><span>2:51 AM</span><span>4/11/2018</span></span>
        <span className="relative ml-[19px] mr-[20px] w-4 h-4">
          <svg viewBox="0 0 16 16" className="w-4 h-4"><path d="M0 1h16v12h-6l-3 3v-3H0z" fill="#fff" /><path d="M3 4.500h10M3 7h10M3 9.500h7" stroke="#111" /></svg>
          <span className="absolute left-[7px] top-[7px] w-4 h-4 rounded-full bg-[#2a2b2d] border border-[#888] text-[11px] leading-[14px] text-center">1</span>
        </span>
        <span className="h-10 w-[5px] border-l border-[#555]" />
      </div>
    </div>
  );
}

export default function App() {
  return (
    <div className="w-[2560px] h-[1440px] flex flex-col overflow-hidden bg-[#a2a2a2] font-['DejaVu_Sans',Verdana,sans-serif] text-[11px] leading-none tracking-[0.25px] text-[#0a0a0a] cursor-default">
      <TitleBar />
      <Toolbar />
      <div className="h-[1303px] shrink-0 flex">
        <div className="w-[1314px] border-r border-[#6e6e6e] flex flex-col mr-1"><SceneView /><GameView /></div>
        <div className="w-[618px] flex flex-col mr-1"><Hierarchy /><Project /></div>
        <Inspector />
      </div>
      <div className="h-[22px] shrink-0" />
      <Taskbar />
    </div>
  );
}
